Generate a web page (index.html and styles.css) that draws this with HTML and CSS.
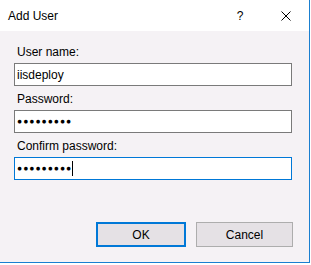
FILE: index.html
```html
<!DOCTYPE html>
<html lang="en">
  <head>
    <meta charset="UTF-8" />
    <title>Add User</title>
    <link rel="stylesheet" href="styles.css">
  </head>

  <body>
    <div class="dialog">
      <div class="titlebar">
        <span class="title">Add User</span>
        <span class="help">?</span>
        <span class="close">
          <svg viewBox="0 0 10 10" class="close-icon">
            <path d="M0.5 0.5L9.5 9.5M9.5 0.5L0.5 9.5" stroke="#000" stroke-width="1" />
          </svg>
        </span>
      </div>

      <div class="content">
        <div class="field">
          <label class="field-label">User name:</label>
          <div class="field-input">iisdeploy</div>
        </div>
        <div class="field">
          <label class="field-label">Password:</label>
          <div class="field-input field-input--dots">●●●●●●●●●</div>
        </div>
        <div class="field">
          <label class="field-label">Confirm password:</label>
          <div class="field-input field-input--dots field-input--focus">●●●●●●●●●<span class="caret"></span></div>
        </div>

        <div class="buttons">
          <button class="btn btn--default">OK</button>
          <button class="btn btn--cancel">Cancel</button>
        </div>
      </div>
    </div>
  </body>
</html>
```

FILE: styles.css
```css
/* MAIN COLOR: #0078d7 */

* {
  margin: 0;
  padding: 0;
  box-sizing: border-box;
}

body {
  font-family: "Liberation Sans", Arial, sans-serif;
  color: #000;
  background-color: #fff;
  line-height: 1;
}

.dialog {
  width: 310px;
  height: 263px;
  background-color: #f5f2f5;
  border-right: 1px solid #1a7fd0;
  border-bottom: 1px solid #1a7fd0;

  display: flex;
  flex-direction: column;
}

/* TITLE BAR */
.titlebar {
  height: 31px;
  background-color: #fff;
  padding-left: 8px;

  display: flex;
  align-items: center;
}
.title {
  font-size: 12px;
  flex: 1;
}
.help {
  font-size: 12px;
  width: 46px;
  text-align: center;
}
.close {
  width: 46px;
  height: 31px;

  display: flex;
  align-items: center;
  justify-content: center;
}
.close-icon {
  width: 10px;
  height: 10px;
}

/* FORM */
.content {
  flex: 1;
  padding: 15px 0 0 14px;

  display: flex;
  flex-direction: column;
}
.field {
  display: flex;
  flex-direction: column;
  gap: 4px;
  margin-bottom: 7px;
}
.field-label {
  font-size: 12px;
  line-height: 13px;
  padding-left: 3px;
}
.field-input {
  width: 278px;
  height: 23px;
  background-color: #fff;
  border: 1px solid #7a7a7a;
  font-size: 12px;
  padding-left: 2px;

  display: flex;
  align-items: center;
}
.field-input--dots {
  font-size: 8.5px;
  letter-spacing: 1px;
}
.field-input--focus {
  border-color: #0078d7;
}
.caret {
  width: 1px;
  height: 15px;
  background-color: #000;
}

/* BUTTONS */
.buttons {
  margin-top: 35px;
  padding-left: 82px;

  display: flex;
  gap: 10px;
}
.btn {
  height: 25px;
  background-color: #e5e1e5;
  border: 1px solid #adadad;
  font-family: inherit;
  font-size: 12px;
  color: #000;
}
.btn--default {
  width: 90px;
  border: 2px solid #0078d7;
}
.btn--cancel {
  width: 97px;
}
```
